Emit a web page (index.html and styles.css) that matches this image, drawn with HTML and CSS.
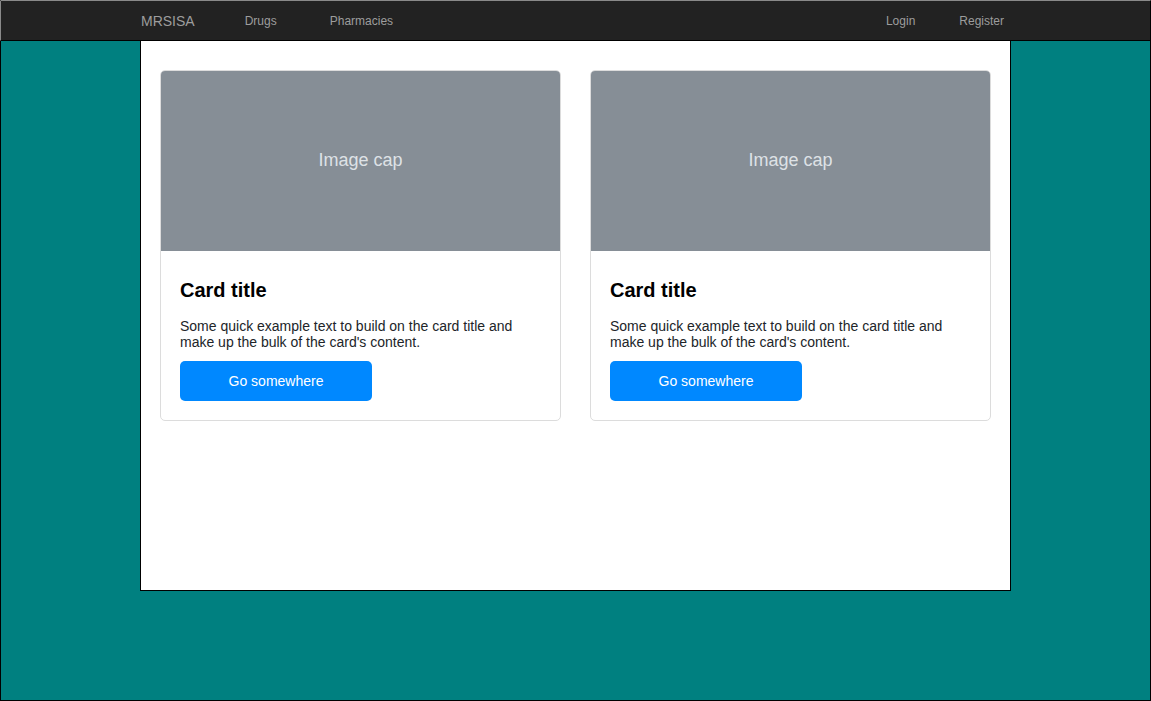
FILE: index.html
```html
<!DOCTYPE html>
<html>
<head>
<meta charset="utf-8">
<link rel="stylesheet" href="styles.css">
</head>
<body>
<div class="frame">
  <nav class="nav">
    <div class="nav-inner">
      <a class="brand">MRSISA</a>
      <a class="link link-drugs">Drugs</a>
      <a class="link">Pharmacies</a>
      <span class="spacer"></span>
      <a class="link link-login">Login</a>
      <a class="link">Register</a>
    </div>
  </nav>
  <main class="container">
    <div class="card">
      <div class="cap">Image cap</div>
      <div class="card-body">
        <h5 class="card-title">Card title</h5>
        <p class="card-text">Some quick example text to build on the card title and make up the bulk of the card's content.</p>
        <a class="btn">Go somewhere</a>
      </div>
    </div>
    <div class="card">
      <div class="cap">Image cap</div>
      <div class="card-body">
        <h5 class="card-title">Card title</h5>
        <p class="card-text">Some quick example text to build on the card title and make up the bulk of the card's content.</p>
        <a class="btn">Go somewhere</a>
      </div>
    </div>
  </main>
</div>
</body>
</html>
```

FILE: styles.css
```css
* { box-sizing: border-box; }
html, body { margin: 0; padding: 0; }
body {
  font-family: "Liberation Sans", Arial, sans-serif;
  width: 1151px;
  height: 701px;
  overflow: hidden;
}
.frame {
  width: 1151px;
  height: 701px;
  background: #008080;
  border: 1px solid #000;
  border-top-color: #8a8a8a;
}
.nav {
  height: 40px;
  background: #222;
  border-bottom: 1px solid #000;
  border-left: 1px solid #8a8a8a;
  margin-left: -1px;
}
.nav-inner {
  width: 870px;
  margin-left: 140px;
  height: 39px;
  display: flex;
  align-items: center;
  padding-left: 0;
  padding-right: 7px;
  color: #9d9d9d;
}
.nav a { color: #9d9d9d; text-decoration: none; }
.brand { font-size: 14px; margin-right: 50px; padding-top: 1px; }
.link { font-size: 12px; padding-top: 1px; }
.link-drugs { margin-right: 53px; }
.link-login { margin-right: 44px; }
.spacer { flex: 1; }
.container {
  width: 871px;
  height: 550px;
  margin-left: 139px;
  background: #fff;
  border: 1px solid #000;
  border-top: none;
  padding: 29px 19px 0 19px;
  display: flex;
  align-items: flex-start;
  gap: 29px;
}
.card {
  width: 401px;
  border: 1px solid #dcdcdc;
  border-radius: 5px;
  overflow: hidden;
  background: #fff;
}
.cap {
  height: 180px;
  background: #868e96;
  color: #dee2e6;
  font-size: 18px;
  display: flex;
  align-items: center;
  justify-content: center;
  padding-bottom: 1px;
}
.card-body {
  padding: 27px 19px 19px 19px;
}
.card-title {
  margin: 0 0 16px 0;
  font-size: 20px;
  line-height: 24px;
  font-weight: bold;
  color: #000;
}
.card-text {
  margin: 0 0 11px 0;
  font-size: 14px;
  line-height: 16px;
  color: #212529;
}
.btn {
  display: flex;
  align-items: center;
  justify-content: center;
  width: 192px;
  height: 40px;
  background: #0088ff;
  color: #fff;
  font-size: 14px;
  border-radius: 5px;
}
```
